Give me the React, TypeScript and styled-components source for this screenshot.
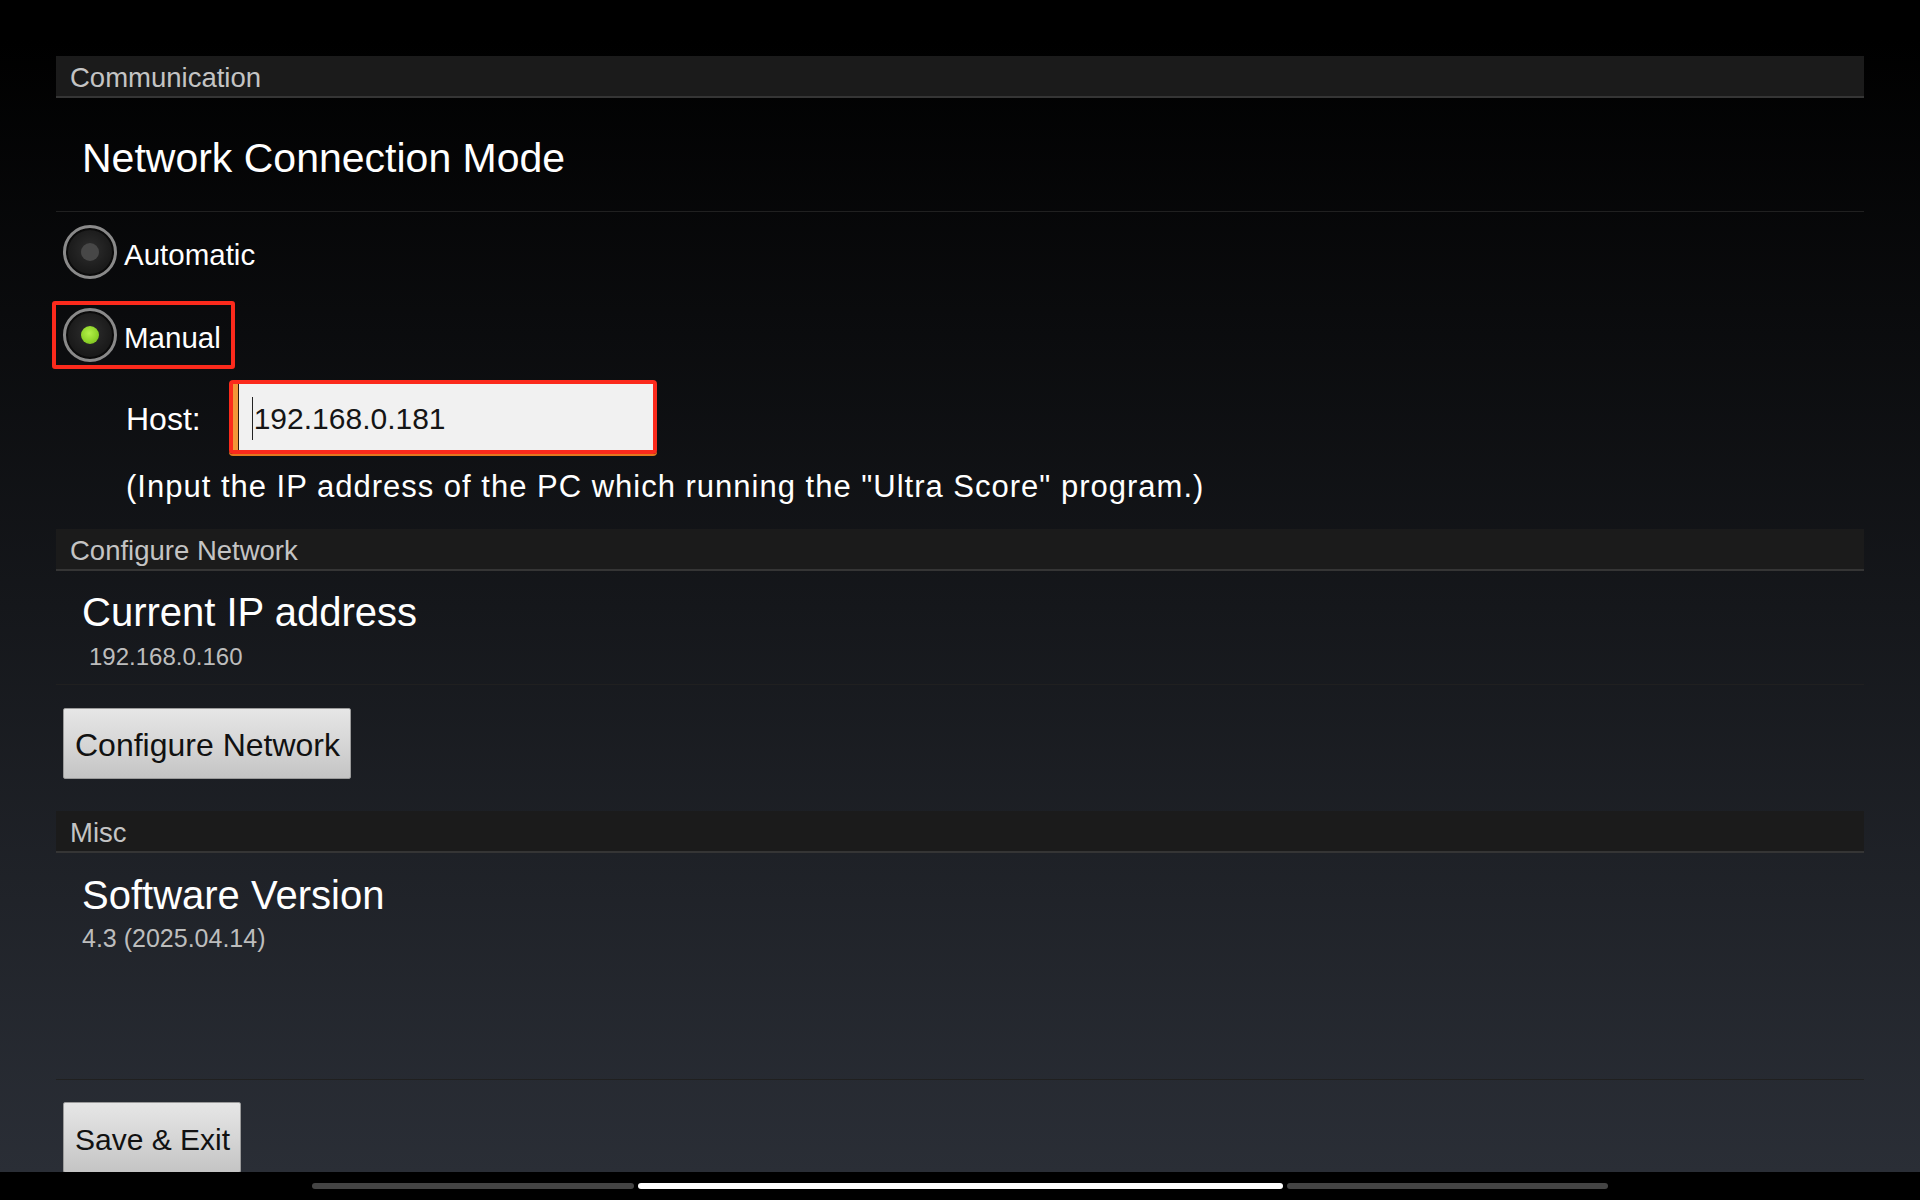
import styled, { createGlobalStyle } from "styled-components";

const GlobalStyle = createGlobalStyle`
  html, body {
    margin: 0;
    padding: 0;
    background: #000;
  }
  body {
    font-family: "Liberation Sans", Arial, sans-serif;
  }
  * {
    box-sizing: border-box;
  }
`;

const Screen = styled.div`
  height: 100vh;
  display: flex;
  flex-direction: column;
  overflow: hidden;
  background: #000;
`;

const Content = styled.div`
  flex: 1;
  min-height: 0;
  overflow: hidden;
  padding: 56px 56px 0;
  background: linear-gradient(to bottom, #000 0px, #000 40px, #2a2e36 100%);
`;

const SectionHeader = styled.div`
  height: 42px;
  padding: 4px 0 0 14px;
  background: #1b1b1b;
  border-bottom: 2px solid #353535;
  font-size: 27.5px;
  line-height: 36px;
  color: #c4c4c4;
`;

const PrefItem = styled.div<{ $top: number; $bottom: number }>`
  padding: ${(p) => p.$top}px 26px ${(p) => p.$bottom}px;
  border-bottom: 1px solid #202020;
`;

const Title = styled.div<{ $size?: number }>`
  font-size: ${(p) => p.$size ?? 40}px;
  line-height: 46px;
  color: #fff;
`;

const Summary = styled.div<{ $size: number; $gap: number; $inset?: number }>`
  margin-top: ${(p) => p.$gap}px;
  margin-left: ${(p) => p.$inset ?? 0}px;
  font-size: ${(p) => p.$size}px;
  line-height: 30px;
  color: #bdbdbd;
`;

const RadioGroup = styled.div`
  display: flex;
  flex-direction: column;
  align-items: flex-start;
  gap: 15px;
  padding-top: 6px;
`;

const RadioRow = styled.div<{ $highlight?: boolean }>`
  display: inline-flex;
  align-items: center;
  gap: 7px;
  height: 68px;
  margin-left: -4px;
  padding: 0 10px 0 7px;
  border: 4px solid ${(p) => (p.$highlight ? "#fb2a1c" : "transparent")};
  border-radius: 3px;
`;

const RadioCircle = styled.span`
  display: flex;
  align-items: center;
  justify-content: center;
  width: 54px;
  height: 54px;
  border-radius: 50%;
  border: 3px solid #8a8a8a;
  background: radial-gradient(circle at 50% 45%, #2e2e2e 0%, #1b1b1b 60%, #111 100%);
  box-shadow: inset 0 0 0 2px #0b0b0b;
`;

const RadioDot = styled.span<{ $on?: boolean }>`
  width: 18px;
  height: 18px;
  border-radius: 50%;
  background: ${(p) =>
    p.$on
      ? "radial-gradient(circle at 45% 40%, #b4f04a 0%, #8fd42a 55%, #6fae1c 100%)"
      : "#474747"};
`;

const RadioLabel = styled.span`
  padding-top: 6px;
  font-size: 29.5px;
  color: #fff;
`;

const HostRow = styled.div`
  display: flex;
  align-items: center;
  gap: 28px;
  margin-top: 11px;
  padding-left: 70px;
`;

const HostLabel = styled.span`
  padding-top: 5px;
  font-size: 32px;
  color: #fff;
`;

const HostFrame = styled.div`
  width: 428px;
  height: 74px;
  border: 4px solid #fb2a1c;
  border-radius: 4px;
  box-shadow: 0 2px 0 #e2781e;
`;

const HostField = styled.div`
  display: flex;
  align-items: center;
  height: 100%;
  padding: 3px 0 0 14px;
  background: #f1f1f1;
  border-left: 5px solid #f29638;
  box-shadow: inset 1px 0 0 #2a1a10;
  font-size: 30px;
  color: #151515;
`;

const Caret = styled.span`
  width: 1px;
  height: 43px;
  margin-right: 1px;
  background: #222;
`;

const Caption = styled.div`
  margin: 15px 0 24px;
  padding-left: 70px;
  font-size: 31px;
  line-height: 36px;
  letter-spacing: 1px;
  color: #fff;
`;

const ButtonRow = styled.div<{ $top: number; $bottom: number }>`
  padding: ${(p) => p.$top}px 7px ${(p) => p.$bottom}px;
`;

const GreyButton = styled.button<{ $size: number }>`
  height: 71px;
  padding: 4px 10px 0 11px;
  border: 1px solid #9a9a9a;
  border-radius: 2px;
  background: linear-gradient(to bottom, #e6e6e6 0%, #d6d6d6 50%, #c4c4c4 100%);
  font-family: inherit;
  font-size: ${(p) => p.$size}px;
  color: #111;
  cursor: pointer;
`;

const NavBar = styled.div`
  height: 28px;
  flex-shrink: 0;
  display: flex;
  justify-content: center;
  gap: 4px;
  padding-top: 11px;
  background: #000;
`;

const NavPill = styled.span<{ $width: number; $active?: boolean }>`
  width: ${(p) => p.$width}px;
  height: 6px;
  border-radius: 3px;
  background: ${(p) => (p.$active ? "#fff" : "#444")};
`;

const Radio = ({ label, checked, highlight }: { label: string; checked?: boolean; highlight?: boolean }) => (
  <RadioRow $highlight={highlight}>
    <RadioCircle>
      <RadioDot $on={checked} />
    </RadioCircle>
    <RadioLabel>{label}</RadioLabel>
  </RadioRow>
);

const App = () => {
  return (
    <>
      <GlobalStyle />
      <Screen>
        <Content>
          <SectionHeader>Communication</SectionHeader>
          <PrefItem $top={37} $bottom={30}>
            <Title $size={41}>Network Connection Mode</Title>
          </PrefItem>

          <RadioGroup>
            <Radio label="Automatic" />
            <Radio label="Manual" checked highlight />
          </RadioGroup>

          <HostRow>
            <HostLabel>Host:</HostLabel>
            <HostFrame>
              <HostField>
                <Caret />
                192.168.0.181
              </HostField>
            </HostFrame>
          </HostRow>
          <Caption>(Input the IP address of the PC which running the "Ultra Score" program.)</Caption>

          <SectionHeader>Configure Network</SectionHeader>
          <PrefItem $top={18} $bottom={12}>
            <Title>Current IP address</Title>
            <Summary $size={24} $gap={7} $inset={7}>
              192.168.0.160
            </Summary>
          </PrefItem>
          <ButtonRow $top={23} $bottom={32}>
            <GreyButton $size={32}>Configure Network</GreyButton>
          </ButtonRow>

          <SectionHeader>Misc</SectionHeader>
          <PrefItem $top={19} $bottom={126}>
            <Title>Software Version</Title>
            <Summary $size={25} $gap={5}>
              4.3 (2025.04.14)
            </Summary>
          </PrefItem>
          <ButtonRow $top={22} $bottom={0}>
            <GreyButton $size={30}>Save &amp; Exit</GreyButton>
          </ButtonRow>
        </Content>
        <NavBar>
          <NavPill $width={322} />
          <NavPill $width={645} $active />
          <NavPill $width={321} />
        </NavBar>
      </Screen>
    </>
  );
};

export default App;
